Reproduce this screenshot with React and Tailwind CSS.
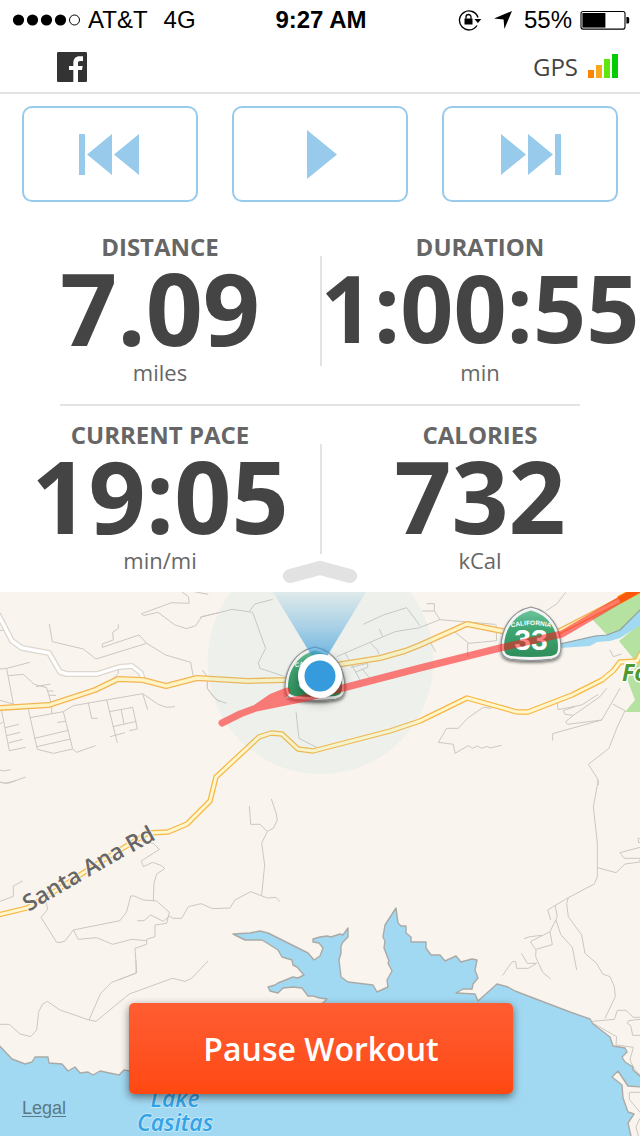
const stats = [
  [
    { label: 'DISTANCE', value: '7.09', unit: 'miles' },
    { label: 'DURATION', value: '1:00:55', unit: 'min', long: true },
  ],
  [
    { label: 'CURRENT PACE', value: '19:05', unit: 'min/mi' },
    { label: 'CALORIES', value: '732', unit: 'kCal' },
  ],
];

// minor streets, grouped in tiles with their own origin (3 units = 1 map unit)
const streetTiles = [
  {
    origin: 'translate(0 585) scale(0.33333)',
    d: 'M148 117L157 170L250 192L288 222L440 175M355 118V130L338 142L340 165L307 177V187L417 150L440 175L497 210L572 232L580 275M545 20L565 35L568 55L515 53L425 86L430 92L474 82L525 120L560 131L587 122L605 95L660 82M583 20L625 28M0 252L20 250L90 232M20 250L40 357L0 346M25 272L70 268L103 298L140 308L155 360V385M108 305L152 297M143 318H160M147 331H168M85 373L112 493L160 505L218 492L230 502L287 482M90 398L190 380L220 362L428 326L475 358L500 367L525 365M190 380L218 492M172 412L197 409M103 460L205 436M110 485L212 462M5 378L28 497L77 487M15 428L57 418M20 452L60 442M25 474L68 463M0 416L8 412M265 353L275 400H293M320 345L352 474M328 380L398 367L412 432L388 437M364 375L372 416M338 425L410 409M330 455L375 443M428 326L443 374M355 250V265L340 280M0 555L12 558L32 554M0 592L25 595L77 576M0 136H12M607 255L622 275V310L640 335L660 350',
  },
  {
    origin: 'translate(200 585) scale(0.33333)',
    d: 'M0 97L97 73L158 82L197 190L175 233L180 250L250 273M147 80L165 57L218 43M22 290V310L50 345L80 355M288 380L297 460L350 487M490 118L550 90L620 68L660 122M410 215L510 172L585 140L660 128M538 132L548 155M510 172L532 195L537 208M435 203L480 285M453 247L503 235V247L465 262M485 250L508 278',
  },
  {
    origin: 'translate(420 585) scale(0.33333)',
    d: 'M0 127L60 104L225 118M20 56H43V78H7M43 78L60 104M103 140L147 175L230 167L228 118M143 175V215M30 170L47 200M437 22L410 57L378 78M320 78L335 70M215 370L190 367L142 400L115 430H80L55 472L100 478L105 505L145 482L158 490L172 483L185 490L202 484L210 489L245 481M412 353L414 374L485 360L535 328M465 365L430 377L435 388L460 391L540 335L560 310M437 410L443 418L545 405L600 310M460 391L437 410M398 467V446L545 405M578 357L615 377L590 430L567 490L505 538L533 582L535 600M570 195L580 215L605 207',
  },
  {
    origin: 'translate(0 780) scale(0.33333)',
    d: 'M0 364L40 349V318L68 303M138 365L143 388L123 412L170 487H183L195 483L220 450L360 422L380 395L392 348H403L430 360L470 363L508 397L500 430L465 435V470L440 478V493L405 505L410 578L355 600M220 450L235 478L290 473L338 493L395 478L440 482M412 422H432L452 405L490 424L508 408L520 415H545L565 380L603 371L638 386L690 384L705 360L752 335L802 354L828 352L840 365M460 362L462 310L470 282L494 266L485 257L458 247L430 260L424 243L478 208L460 190H430M748 78L752 133H780L802 154L785 190L794 255L785 345M802 154L820 145L832 120L828 98L814 57M0 6L15 10L48 2',
  },
  {
    origin: 'translate(320 780) scale(0.33333)',
    d: 'M835 0L820 80L832 190V290L823 312L745 353L683 390L692 420M745 353L740 370L745 410L785 465L795 520L830 550L848 582L870 590L883 620L886 650L855 715M705 375L712 410L690 455L631 485L648 510L647 530L668 577L692 597M708 420L722 463L757 502L770 570M612 476L630 470L665 466M690 455L697 494L648 508M604 520L622 550H650L625 565H590L587 545H577L547 587M832 263L888 278L915 252L960 246V235H913L900 218L960 202M960 175H955V188H960',
  },
  {
    origin: 'translate(0 960) scale(0.33333)',
    d: 'M408 0V40L335 67L302 100L267 180L180 150L142 124L128 132L116 155L110 210L92 230L60 222L28 193H0M267 180L288 184L388 102L517 55L555 64L575 55L624 3',
  },
  {
    origin: 'translate(320 960) scale(0.33333)',
    d: 'M817 184L883 178L892 151H918L940 172H960M960 178L925 182L922 190L932 197L938 226H960M820 190L890 230L888 255L940 262L930 300L942 325L960 345M960 397H928V418L960 457M960 475L948 500L955 528',
  },
];

const lake =
  'M233 934L250 933L260 931L268 933L308 953L314 960L320 956L323 948L319 943L313 942L313 939L320 937L327 936L331 937L340 934L343 935L348 928L348 937L343 942L341 946V953L339 960L341 977L348 982L373 985L377 992L388 987L387 980L392 971L388 963L389 961L384 948L385 941L383 937L385 925L396 908L398 923L401 926L406 926V933L411 937V942L426 942V948L431 955L440 955L445 961L456 956L461 962L472 959L477 960L475 970L478 978L473 984L472 989H463L456 993L475 994L478 1001L497 984L508 987L515 991L570 1012L590 1019L593 1024L610 1037L613 1046L625 1048L627 1052L622 1057L625 1062L633 1067V1070L642 1078V1087L628 1086L618 1071L612 1077L622 1085L623 1098L628 1112L634 1114L628 1123L630 1132L632 1140H-4V1042L12 1059L25 1064L32 1062L35 1057H48L49 1063L62 1064L68 1071L75 1067L80 1073L88 1072L93 1075L100 1071L119 1075L124 1070L130 1071L200 1050L323 1003L327 999L320 998L313 996H308L302 988L293 987L283 988L278 993L270 991L268 987L275 985L278 983L293 977L298 978L304 975L297 967L293 965L292 960L282 957L278 950L267 943L262 940H245Z';

const highway =
  'M-2 708L49 705L95 690L118 679L143 680L166 686L197 678L248 681L285 680L342 664L380 658L405 651L420 645L467 624L502 631L558 632L620 600L645 586';
const santaAnaRd =
  'M-2 915L27 908L60 888L100 862L148 833L168 832L187 824L210 801L216 777L259 737L271 733L282 734L298 749L313 751L390 731L420 721L467 698L517 712H528L572 695L602 680L613 671L620 662L637 661L643 650';
const whiteRoad = 'M-2 614L12 641L22 648L49 653L60 672L67 674H97L119 667L132 666L141 673L143 680';

function StatusBar() {
  return (
    <div className="grid h-10 grid-cols-[1fr_auto_1fr] items-center pl-3 pr-2.5 font-['Liberation_Sans',sans-serif] text-2xl text-black">
      <div className="flex items-center gap-2">
        <svg className="h-3 w-[68px]" viewBox="0 0 68 12">
          <circle cx="6.5" cy="6" r="5.6" />
          <circle cx="20.5" cy="6" r="5.6" />
          <circle cx="34.5" cy="6" r="5.6" />
          <circle cx="48.5" cy="6" r="5.6" />
          <circle cx="62.5" cy="6" r="5" fill="none" stroke="#000" />
        </svg>
        <span>AT&amp;T</span>
        <span className="ml-2">4G</span>
      </div>
      <span className="font-bold">9:27 AM</span>
      <div className="flex items-center justify-end">
        <svg className="mr-3 h-[22px] w-6" viewBox="0 0 24 22">
          <path d="M19 16.5A9.5 9.5 0 1 1 20 8.5" fill="none" stroke="#000" strokeWidth="1.4" />
          <path d="M16.4 10h7l-3.5 4z" />
          <path d="M6.5 9.5h8v6h-8z" />
          <path d="M8 9.700V8a2.500 2.500 0 0 1 5 0v1.700" fill="none" stroke="#000" strokeWidth="1.3" />
        </svg>
        <svg className="mr-3 h-[18px] w-[18px]" viewBox="0 0 18 18">
          <path d="M18 0L10.4 18L9.6 8.4L0 7.6z" />
        </svg>
        <span className="mr-2">55%</span>
        <svg className="h-5 w-[50px]" viewBox="0 0 50 20">
          <rect x="1" y="1.5" width="44" height="17.6" rx="2" fill="none" stroke="#000" strokeWidth="1.1" />
          <rect x="2.4" y="3" width="23" height="14.6" />
          <path d="M46.4 7h1.4q1.4 0 1.4 1.6v3.4q0 1.6-1.4 1.6h-1.4z" />
        </svg>
      </div>
    </div>
  );
}

function Header() {
  return (
    <header className="flex h-[54px] items-center justify-between border-b-2 border-[#e3e3e3] pl-[57px] pr-[22px] pt-0.5">
      <a href="#facebook" aria-label="Facebook">
        <svg className="h-[30px] w-[30px]" viewBox="0 0 90 90">
          <rect width="90" height="90" rx="4" fill="#333" />
          <path
            d="M49 90V54H36V42H49V34C49 20 56 13 68 13H78V27H70C64 27 63 29 63 34V42H77L75 54H63V90Z"
            fill="#fff"
          />
        </svg>
      </a>
      <div className="flex items-center gap-2.5 text-2xl text-[#444]">
        <span>GPS</span>
        <svg className="mb-0.5 h-6 w-[30px]" viewBox="0 0 30 24">
          <rect y="16" width="6" height="8" fill="#ff8500" />
          <rect x="8" y="11" width="6" height="13" fill="#f8a81c" />
          <rect x="16" y="5" width="6" height="19" fill="#5fe60d" />
          <rect x="24" width="6" height="24" fill="#0c0" />
        </svg>
      </div>
    </header>
  );
}

function PlayerButton({ label, children }) {
  return (
    <button
      aria-label={label}
      className="flex h-24 flex-1 items-center justify-center rounded-[10px] border-2 border-[#98cbeb] text-[#98cbeb]"
    >
      {children}
    </button>
  );
}

function Player() {
  return (
    <div className="flex gap-[34px] px-[22px] pb-4 pt-3">
      <PlayerButton label="Previous">
        <svg className="h-[41px] w-[62px]" viewBox="0 0 62 41" fill="currentColor">
          <path d="M0 0h6v41H0zM33 0v41L8 20.5zM60 0v41L35 20.5z" />
        </svg>
      </PlayerButton>
      <PlayerButton label="Play">
        <svg className="h-[49px] w-[34px]" viewBox="0 0 34 49" fill="currentColor">
          <path d="M4 0l30 24.5L4 49z" />
        </svg>
      </PlayerButton>
      <PlayerButton label="Next">
        <svg className="h-[41px] w-[62px]" viewBox="0 0 62 41" fill="currentColor">
          <path d="M2 0v41l25-20.5zM29 0v41l25-20.5zM56 0h6v41h-6z" />
        </svg>
      </PlayerButton>
    </div>
  );
}

function Stat({ label, value, unit, long }) {
  return (
    <div className="min-w-0 flex-1 whitespace-nowrap text-center">
      <div className="text-2xl font-bold leading-9 text-[#666]">{label}</div>
      <div
        className={
          long
            ? 'text-[93px] font-bold leading-[84px] text-[#444]'
            : 'text-[100px] font-bold leading-[84px] text-[#444]'
        }
      >
        {value}
      </div>
      <div className="mt-[3px] pb-px text-[22px] leading-10 text-[#666]">{unit}</div>
    </div>
  );
}

function StatRow({ items }) {
  return (
    <div className="flex py-[11px]">
      <Stat {...items[0]} />
      <div className="-mr-0.5 mt-[27px] h-[110px] w-0.5 bg-[#e3e3e3]" />
      <Stat {...items[1]} />
    </div>
  );
}

function Shield({ x, y }) {
  return (
    <g transform={`translate(${x} ${y})`}>
      <path
        d="M0 -28C20 -24 30 -6 30 13C30 20 27 23 21 24Q0 27 -21 24C-27 23 -30 20 -30 13C-30 -6 -20 -24 0 -28Z"
        fill="#f4f4f4"
        stroke="#8e9494"
        strokeWidth="1.2"
        filter="url(#drop)"
      />
      <path
        d="M0 -24.5C18 -20 27 -4 27 12C27 18 25 20 20 21Q0 23 -20 21C-25 20 -27 18 -27 12C-27 -4 -18 -20 0 -24.5Z"
        fill="url(#shieldGreen)"
      />
      <path id={`arc-${x}`} d="M-22 -7Q0 -13 22 -7" fill="none" />
      <text fill="#fff" fontSize="6.5" fontWeight="700" textAnchor="middle" className="font-['Liberation_Sans',sans-serif]">
        <textPath href={`#arc-${x}`} startOffset="50%">
          CALIFORNIA
        </textPath>
      </text>
      <text y="15" fill="#fff" fontSize="30" fontWeight="700" textAnchor="middle" className="font-['Liberation_Sans',sans-serif]">
        33
      </text>
    </g>
  );
}

function MapView() {
  return (
    <svg
      className="absolute inset-0 h-full w-full"
      viewBox="0 592 640 544"
      preserveAspectRatio="xMidYMid slice"
      strokeLinejoin="round"
    >
      <defs>
        <linearGradient id="shieldGreen" x1="0" y1="0" x2="0" y2="1">
          <stop offset="0" stopColor="#6cc49c" />
          <stop offset="0.4" stopColor="#3fa673" />
          <stop offset="1" stopColor="#2f8e5b" />
        </linearGradient>
        <linearGradient id="cone" x1="0" y1="0" x2="0" y2="1">
          <stop offset="0" stopColor="#369bdd" stopOpacity="0.08" />
          <stop offset="0.5" stopColor="#369bdd" stopOpacity="0.36" />
          <stop offset="1" stopColor="#369bdd" stopOpacity="0.7" />
        </linearGradient>
        <filter id="drop" x="-30%" y="-30%" width="160%" height="170%">
          <feDropShadow dx="0" dy="2" stdDeviation="1.5" floodOpacity="0.5" />
        </filter>
        <filter id="dotShadow" x="-60%" y="-60%" width="220%" height="220%">
          <feDropShadow dx="0" dy="4" stdDeviation="6" floodOpacity="0.35" />
        </filter>
      </defs>
      <rect x="-400" y="192" width="1440" height="1344" fill="#f9f4ed" />

      <path d="M592 619L620 602L642 590V613L620 630L607 635Z" fill="#b5e2a0" />
      <path d="M619 641L642 622V712H625L635 700L627 679L630 669L633 658Z" fill="#b5e2a0" />
      <path d="M560 644L595 636L607 635L620 630L642 608V624L620 638L610 641L597 642L590 646L560 648Z" fill="#a2d9f2" />
      <path d="M560 644L595 636L607 635L620 630L642 608" fill="none" stroke="#8f9c9d" strokeWidth="1.2" />

      <g fill="none" stroke="#cbc8c2" strokeWidth="3">
        {streetTiles.map((tile) => (
          <path key={tile.origin} transform={tile.origin} d={tile.d} />
        ))}
      </g>

      <path d={lake} fill="#a2d9f2" stroke="#a9aaa7" strokeWidth="1.4" />

      <g fill="none">
        <path d={whiteRoad} stroke="#ddd7ce" strokeWidth="6" />
        <path d={whiteRoad} stroke="#fff" strokeWidth="3.4" />
        <path d={santaAnaRd} stroke="#f8b643" strokeWidth="5.4" />
        <path d={santaAnaRd} stroke="#fff7cd" strokeWidth="3" />
        <path d={highway} stroke="#f3b555" strokeWidth="6" />
        <path d={highway} stroke="#fff5c4" strokeWidth="3.4" />
        <path d="M619 600L645 586" stroke="#f5a500" strokeWidth="8" />
      </g>

      <circle cx="320.5" cy="661" r="113" fill="#87d8df" fillOpacity="0.09" />

      <Shield x={315} y={675} />
      <Shield x={531} y={635} />

      <path
        d="M222 723L240 714L256 708L272 697L287 691L277 703L256 708L310 697L343 688L420 668L500 648L562 634L620 600L645 586"
        fill="none"
        stroke="#ff1818"
        strokeOpacity="0.55"
        strokeWidth="7"
        strokeLinecap="round"
      />

      <path d="M273 592H366L326 658H313Z" fill="url(#cone)" />
      <circle cx="320" cy="676" r="22" fill="#fff" filter="url(#dotShadow)" />
      <circle cx="320" cy="676" r="15.5" fill="#369bdd" />

      <path id="santaAnaLabel" d="M29 912Q90 875 166 834" fill="none" />
      <text fill="#666" stroke="#f9f4ed" strokeWidth="2" paintOrder="stroke" fontSize="23" fontWeight="600">
        <textPath href="#santaAnaLabel">Santa Ana Rd</textPath>
      </text>
      <text x="622" y="681" fill="#4f9a30" stroke="#fff" strokeWidth="3" paintOrder="stroke" fontSize="23" fontWeight="700" fontStyle="italic">
        Fo
      </text>
      <g fill="#35a3e6" stroke="#c3e8f8" strokeWidth="2" paintOrder="stroke" fontSize="23" fontWeight="600" fontStyle="italic" textAnchor="middle">
        <text x="175" y="1107">Lake</text>
        <text x="175" y="1131">Casitas</text>
      </g>
    </svg>
  );
}

export default function App() {
  return (
    <div className="flex min-h-screen flex-col bg-white font-['Open_Sans',sans-serif]">
      <StatusBar />
      <Header />
      <Player />
      <section className="relative">
        <StatRow items={stats[0]} />
        <hr className="mx-[60px] border-t-2 border-[#e3e3e3]" />
        <StatRow items={stats[1]} />
        <button aria-label="Expand map" className="absolute bottom-2 left-1/2 -translate-x-1/2">
          <svg className="block h-6 w-[74px]" viewBox="0 0 74 24">
            <path d="M7 16L37 8L67 16" fill="none" stroke="#e2e2e2" strokeWidth="14" strokeLinecap="round" />
          </svg>
        </button>
      </section>
      <main className="relative flex min-h-[544px] flex-1 items-end justify-center overflow-hidden pb-[42px] pl-0.5">
        <MapView />
        <button className="relative h-[91px] w-96 max-w-full rounded-[5px] bg-linear-to-b from-[#ff5d32] to-[#ff4810] text-[32px] font-semibold text-white shadow-[0_3px_8px_rgba(0,0,0,0.5)]">
          Pause Workout
        </button>
        <a
          href="#legal"
          className="absolute bottom-4 left-[22px] font-['Liberation_Sans',sans-serif] text-lg leading-6 text-[#5b7885] underline underline-offset-2"
        >
          Legal
        </a>
      </main>
    </div>
  );
}
